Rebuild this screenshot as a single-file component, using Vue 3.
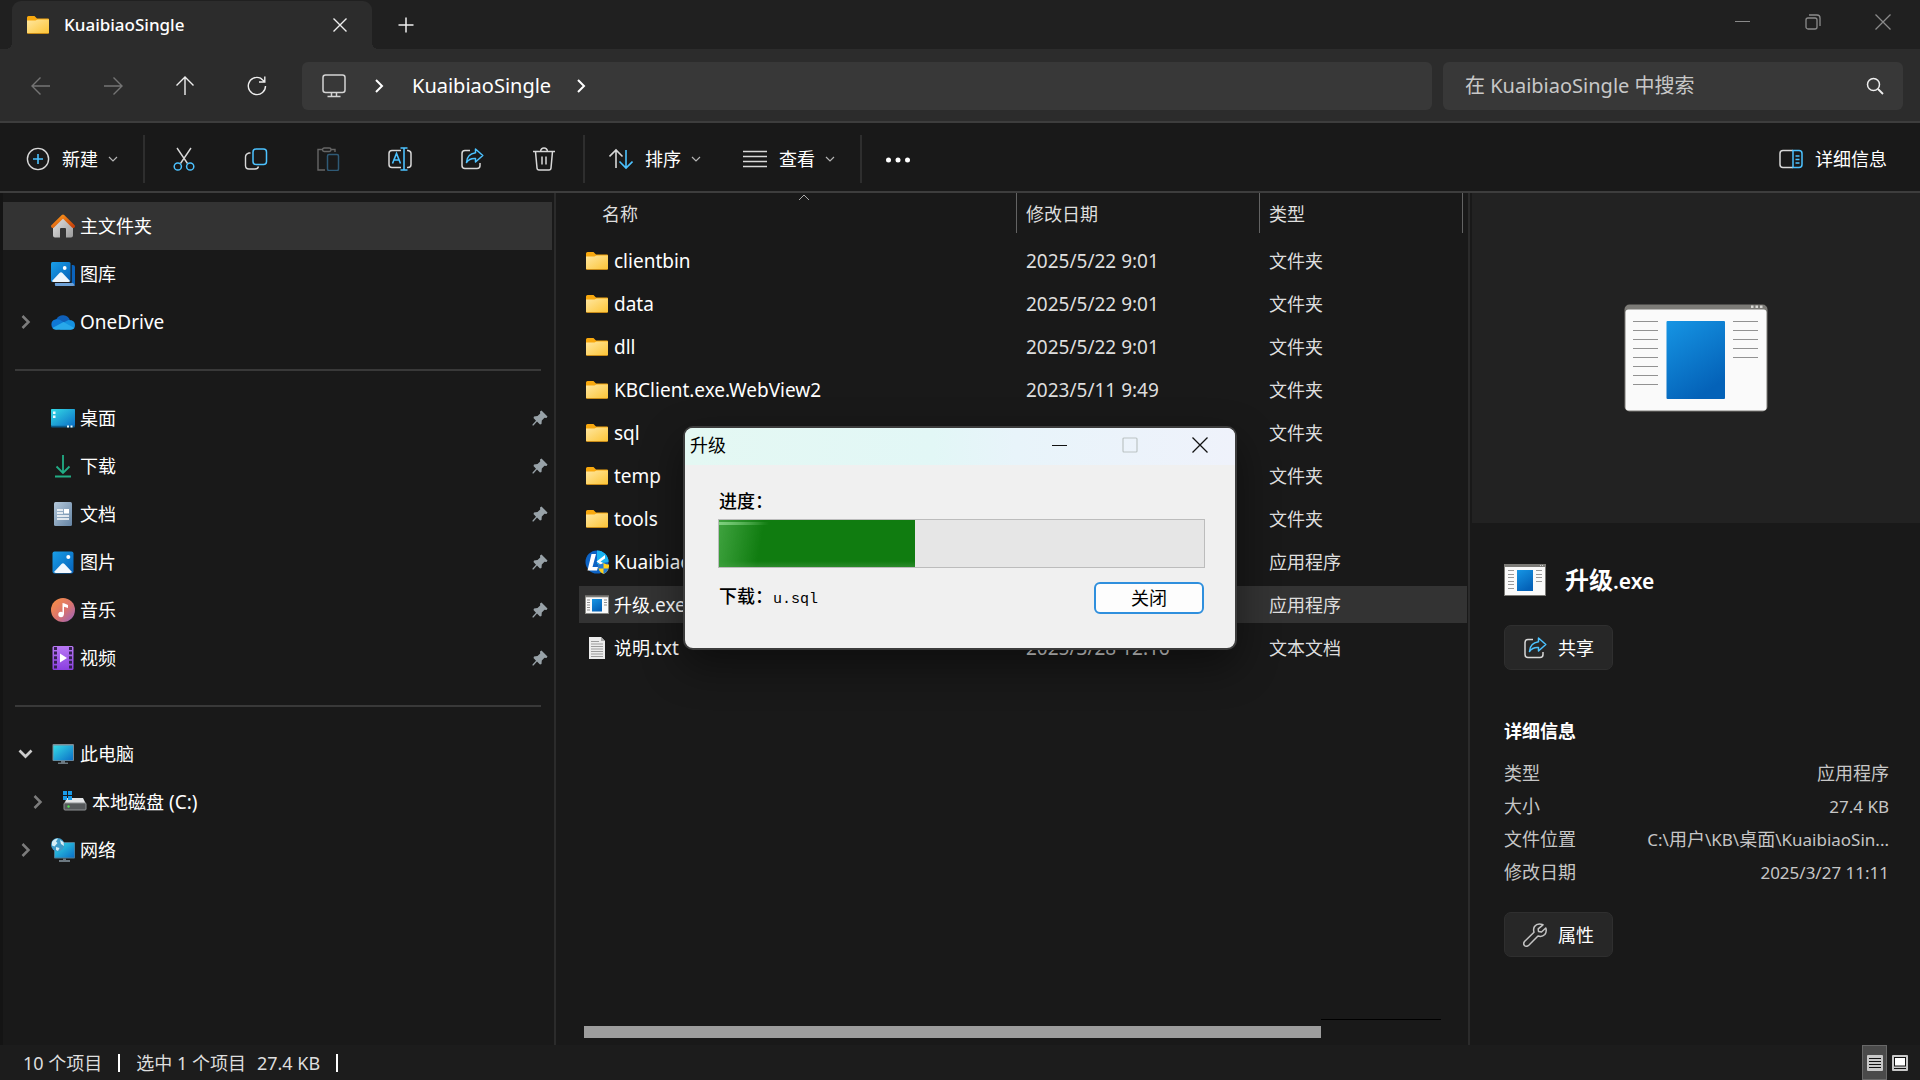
<script setup>
import { h, ref } from 'vue'

// Splits a label into Latin and CJK runs so each script gets its own size.
const MixedText = (props) =>
  h(
    'span',
    { class: 'mixed' },
    (props.text.match(/[\u0000-\u2fff]+|[^\u0000-\u2fff]+/g) || []).map((run) =>
      h('span', { class: run.charCodeAt(0) < 0x3000 ? 'latin' : 'cjk' }, run)
    )
  )
MixedText.props = ['text']

const groups = [
  [
    { icon: 'home', label: '主文件夹', active: true },
    { icon: 'gallery', label: '图库' },
    { icon: 'onedrive', label: 'OneDrive', chevron: 'right' },
  ],
  [
    { icon: 'desktop', label: '桌面', pinned: true },
    { icon: 'download', label: '下载', pinned: true },
    { icon: 'document', label: '文档', pinned: true },
    { icon: 'picture', label: '图片', pinned: true },
    { icon: 'music', label: '音乐', pinned: true },
    { icon: 'video', label: '视频', pinned: true },
  ],
  [
    { icon: 'pc', label: '此电脑', chevron: 'down' },
    { icon: 'disk', label: '本地磁盘 (C:)', chevron: 'right', nested: true },
    { icon: 'network', label: '网络', chevron: 'right' },
  ],
]

const files = [
  { icon: 'folder', name: 'clientbin', date: '2025/5/22 9:01', type: '文件夹' },
  { icon: 'folder', name: 'data', date: '2025/5/22 9:01', type: '文件夹' },
  { icon: 'folder', name: 'dll', date: '2025/5/22 9:01', type: '文件夹' },
  { icon: 'folder', name: 'KBClient.exe.WebView2', date: '2023/5/11 9:49', type: '文件夹' },
  { icon: 'folder', name: 'sql', date: '2025/5/22 9:01', type: '文件夹' },
  { icon: 'folder', name: 'temp', date: '2025/5/22 9:01', type: '文件夹' },
  { icon: 'folder', name: 'tools', date: '2025/5/22 9:01', type: '文件夹' },
  { icon: 'kuaibiao', name: 'KuaibiaoSingle.exe', date: '2025/5/22 9:01', type: '应用程序' },
  { icon: 'exe', name: '升级.exe', date: '2025/3/27 11:11', type: '应用程序', selected: true },
  { icon: 'txt', name: '说明.txt', date: '2025/3/28 12:16', type: '文本文档' },
]

const tools = [
  { icon: 'cut', label: '剪切' },
  { icon: 'copy', label: '复制' },
  { icon: 'paste', label: '粘贴' },
  { icon: 'rename', label: '重命名' },
  { icon: 'share', label: '共享' },
  { icon: 'trash', label: '删除' },
]

const details = [
  ['类型', '应用程序'],
  ['大小', '27.4 KB'],
  ['文件位置', 'C:\\用户\\KB\\桌面\\KuaibiaoSin...'],
  ['修改日期', '2025/3/27 11:11'],
]

const query = ref('')
</script>

<template>
  <svg class="sprite" aria-hidden="true">
    <defs>
      <linearGradient id="gFolder" x1="0" y1="0" x2="1" y2="1"><stop offset="0" stop-color="#ffe7a0" /><stop offset="1" stop-color="#fcc436" /></linearGradient>
      <linearGradient id="gBlue" x1="0" y1="0" x2="1" y2="1"><stop offset="0" stop-color="#1a9fe8" /><stop offset="1" stop-color="#0560b8" /></linearGradient>
      <linearGradient id="gApp" x1="0" y1="0" x2=".5" y2="1"><stop offset="0" stop-color="#1695e4" /><stop offset="1" stop-color="#0462b8" /></linearGradient>
      <linearGradient id="gCyan" x1="0" y1="0" x2="1" y2="1"><stop offset="0" stop-color="#35dbe6" /><stop offset="1" stop-color="#0b6fc7" /></linearGradient>
      <linearGradient id="gRoof" x1="0" y1="0" x2="1" y2="1"><stop offset="0" stop-color="#ff9a1c" /><stop offset="1" stop-color="#c8420a" /></linearGradient>
      <linearGradient id="gWall" x1="0" y1="0" x2="1" y2="1"><stop offset="0" stop-color="#e6e6e6" /><stop offset="1" stop-color="#9c9c9c" /></linearGradient>
      <linearGradient id="gDoc" x1="0" y1="0" x2="1" y2="1"><stop offset="0" stop-color="#b4c8da" /><stop offset="1" stop-color="#6584a4" /></linearGradient>
      <linearGradient id="gMusic" x1="0" y1="0" x2="1" y2="1"><stop offset="0" stop-color="#fb923f" /><stop offset="0.55" stop-color="#d9736f" /><stop offset="1" stop-color="#9561c4" /></linearGradient>
      <linearGradient id="gVideo" x1="0" y1="0" x2="0" y2="1"><stop offset="0" stop-color="#b878f4" /><stop offset="1" stop-color="#8a3fe0" /></linearGradient>
    </defs>
    <symbol id="folder" viewBox="0 0 24 20"><path d="M1 2.5Q1 1 2.500 1H8.500L11 3.500H22Q23 3.500 23 4.500V18H1Z" fill="#f8a80e" /><path d="M1 5.500H9.500L11.500 4.500H23V17.500Q23 18.500 22 18.500H2Q1 18.500 1 17.500Z" fill="url(#gFolder)" /><path d="M1.500 18.500H22.500" stroke="#c98b18" /></symbol>
    <symbol id="home" viewBox="0 0 24 24"><path d="M2 11L12 2L22 11V21.500Q22 23.500 20 23.500H15V15Q15 14 14 14H10Q9 14 9 15V23.500H4Q2 23.500 2 21.500Z" fill="url(#gWall)" /><path d="M1.800 12.200L12 2.200L22.200 12.200" fill="none" stroke="url(#gRoof)" stroke-width="3.400" stroke-linejoin="round" stroke-linecap="round" /></symbol>
    <symbol id="gallery" viewBox="0 0 24 24"><path d="M4 21H20.500V3H22Q24 3 24 5V22Q24 24 22 24H5Q3.500 24 4 21Z" fill="#0a63bd" /><path d="M4 21H22L24 23.500L22 24H5Q3.500 24 4 21Z" fill="#6da0d6" /><rect x="0" y="0" width="20.500" height="21" rx="1.500" fill="#1b1b1b" /><rect width="19.500" height="20" rx="1.500" fill="url(#gBlue)" /><path d="M1 19L8.500 11Q10 9.500 11.500 11L19 19Q18.500 20 17.500 20H2.500Q1.500 20 1 19Z" fill="#eef6fd" /><circle cx="13.700" cy="6" r="1.900" fill="#fff" /></symbol>
    <symbol id="onedrive" viewBox="0 0 24 24"><path d="M7 18.500A5 5 0 0 1 5.500 9A7.500 7.500 0 0 1 19 10.200L14 17Z" fill="#0f5fb8" /><path d="M5 19.500A5 5 0 0 1 4.500 9.600Q8 8.500 11.500 11.500L19 16Z" fill="#0f78d4" /><path d="M11.500 13L17.500 10Q24 10 24 15Q24 19.500 19.500 19.500H9Z" fill="#1490df" /><path d="M5 19.800Q2.500 19.800 1.400 18L12.500 12L23.300 18Q22 19.800 19.500 19.800Z" fill="#28a8ea" /></symbol>
    <symbol id="desktop" viewBox="0 0 24 24"><rect x="0" y="3" width="24" height="18.500" rx="1" fill="#0a5b8c" /><rect x="0" y="3" width="24" height="16.800" rx="1" fill="url(#gCyan)" /><path d="M2 5.500H4.500V8H2ZM2 9.500H4.500V12H2ZM16 19.500H18V21.500H16ZM19.500 19.500H21.500V21.500H19.500Z" fill="#eaf9ff" /></symbol>
    <symbol id="download" viewBox="0 0 24 24"><path d="M12 1V19M5.500 12.500L12 19L18.500 12.500M4 22.500H20" fill="none" stroke="#22ad86" stroke-width="1.800" /></symbol>
    <symbol id="document" viewBox="0 0 24 24"><rect x="3" y="0" width="18" height="24" rx="1.500" fill="url(#gDoc)" /><path d="M6 8H12M6 11H12M6 14H18M6 17H18" stroke="#fff" stroke-width="1.300" /><rect x="13" y="7" width="5" height="4.500" fill="#fff" /></symbol>
    <symbol id="picture" viewBox="0 0 24 24"><rect x="1.500" y="1.500" width="21" height="22" rx="2" fill="url(#gBlue)" /><path d="M3 22L10.500 14Q12 12.500 13.500 14L21 22Q20 23 19 23H5Q4 23 3 22Z" fill="#f2f8fe" /><circle cx="17.300" cy="7" r="2" fill="#fff" /></symbol>
    <symbol id="music" viewBox="0 0 24 24"><circle cx="12" cy="12" r="12" fill="url(#gMusic)" /><circle cx="10" cy="16.500" r="2.700" fill="#fff" /><path d="M11.500 16.500V5Q13 5 17 7V10L13 8.800V16.500Z" fill="#fff" /></symbol>
    <symbol id="video" viewBox="0 0 24 24"><rect x="1.500" y="0" width="21" height="24" rx="1.500" fill="url(#gVideo)" /><path d="M4.500 1V24M19.500 1V24" stroke="#33204f" stroke-width="3" stroke-dasharray="3 1.600" /><path d="M9 7.500L16 12L9 16.500Z" fill="#fff" /></symbol>
    <symbol id="pc" viewBox="0 0 24 24"><rect x="1.500" y="2" width="21.500" height="17" rx="1" fill="#7d8b94" /><rect x="2.500" y="3.500" width="19.500" height="14.800" fill="url(#gCyan)" /><path d="M10 19H14V20.500H17V22H7V20.500H10Z" fill="#6c7880" /></symbol>
    <symbol id="disk" viewBox="0 0 24 24"><path d="M4 8H20L23 14H1Z" fill="#e4e6e8" /><rect x="1" y="13" width="22" height="7" rx="1" fill="#55585b" stroke="#8e9194" /><circle cx="5.500" cy="16.500" r="1.200" fill="#4fe04f" /><path d="M0 1H4V5H0ZM5 1H9V5H5ZM0 6H4V10H0ZM5 6H9V10H5Z" fill="#1a9cea" /></symbol>
    <symbol id="network" viewBox="0 0 24 24"><rect x="3" y="4" width="21" height="16.500" rx="1" fill="#4f7c94" /><rect x="4" y="5" width="19.300" height="14.500" fill="url(#gCyan)" /><path d="M12 20.500H15V22H19V24H8V22H12Z" fill="#6c7880" /><circle cx="6.700" cy="6.700" r="6.700" fill="#3f9bc8" /><path d="M1 4Q3 .500 7 .500L5 3.500L6.500 5L3.500 8.500L1 7.500ZM9 2L12.500 4L13 8L10 6ZM5 9L8.500 10L7 13L5 12Z" fill="#d6eef6" /></symbol>
    <symbol id="pin" viewBox="0 0 16 16"><path d="M9.500 .500L15.500 6.500L14.500 8L12.500 7.800L9.800 10.500L9.500 14L8 14.500L5 11.500L1.500 15.500L.500 15.500L.500 14.500L4 10.800L1.500 8L2 6.500L5.500 6L8.200 3.500L8 1.500Z" fill="#98a2a8" /></symbol>
    <symbol id="right" viewBox="0 0 16 16"><path d="M5 2L11 8L5 14" fill="none" stroke="currentColor" stroke-width="2" /></symbol>
    <symbol id="twist-right" viewBox="0 0 16 16"><path d="M5.500 2L11.500 8L5.500 14" fill="none" stroke="currentColor" stroke-width="2.500" /></symbol>
    <symbol id="twist-down" viewBox="0 0 16 16"><path d="M2.500 4.500L8.500 10.500L14.500 4.500" fill="none" stroke="currentColor" stroke-width="2.700" /></symbol>
    <symbol id="caret" viewBox="0 0 10 10"><path d="M1 3L5 7L9 3" fill="none" stroke="#b4b4b4" stroke-width="1.200" /></symbol>
    <symbol id="exe" viewBox="0 0 24 20"><rect x=".5" y="1" width="23" height="17.500" fill="#fafafa" stroke="#8c8c88" /><path d="M0 1.500H24" stroke="#7c7b77" stroke-width="1.600" /><path d="M2 5H5M2 7.500H5M2 10H5M2 12.500H5M2 15H5M19 5H22M19 7.500H22M19 10H22" stroke="#8f8f8f" /><rect x="7" y="4" width="10" height="12.500" fill="url(#gApp)" /></symbol>
    <symbol id="txt" viewBox="0 0 24 24"><path d="M4 1H16L20 5V23H4Z" fill="#ececec" /><path d="M16 1V5H20Z" fill="#a9a9a9" /><path d="M6 5.500H14M6 8H18M6 10.500H18M6 13H18M6 15.500H18M6 18H18M6 20.500H18" stroke="#9c9c9c" /></symbol>
    <symbol id="kuaibiao" viewBox="0 0 24 24"><circle cx="12" cy="12" r="11.500" fill="#0d63c4" /><path d="M12 .500A11.500 11.500 0 0 1 23.500 12L12 14Z" fill="#1ab3f0" /><path d="M6.500 4H11L7.500 17H13L12 20.500H2.500Z" fill="#fff" /><path d="M20 5L11.500 11.500L19 17V13.500L15.500 11.500L20 8.500Z" fill="#fff" /><path d="M13 14.500Q16 14.500 18.500 13Q21 14.500 24 14.500Q24.500 21 18.500 24Q12.500 21 13 14.500Z" fill="#ffd21f" /><path d="M13 14.500Q16 14.500 18.500 13V18.500H13.200ZM18.500 18.500H23.800Q22.500 22 18.500 24Z" fill="#2378d4" /></symbol>
    <symbol id="share" viewBox="0 0 24 24"><path d="M10 3.500H5Q2 3.500 2 6.500V18.500Q2 21.500 5 21.500H17Q20 21.500 20 18.500V16" fill="none" stroke="#d8d8d8" stroke-width="1.500" /><path d="M15.500 2L22.800 8.500L15.500 15V11.500Q9.500 11 6.500 15.500Q7 7 15.500 5.800Z" fill="none" stroke="#4cc2ff" stroke-width="1.500" stroke-linejoin="round" /></symbol>
    <symbol id="cut" viewBox="0 0 24 24"><path d="M5 1L15.500 16.500M19 1L8.500 16.500" stroke="#d8d8d8" stroke-width="1.400" /><circle cx="5.800" cy="19.500" r="3.600" fill="none" stroke="#4cc2ff" stroke-width="1.500" /><circle cx="18.200" cy="19.500" r="3.600" fill="none" stroke="#4cc2ff" stroke-width="1.500" /></symbol>
    <symbol id="copy" viewBox="0 0 24 24"><path d="M6.500 6H5Q1.500 7 1.500 10V18.500Q1.500 22 5 22H11Q14 22 14.500 19.500" fill="none" stroke="#d8d8d8" stroke-width="1.400" /><rect x="9" y="2" width="13.500" height="15.500" rx="3" fill="none" stroke="#4cc2ff" stroke-width="1.500" /></symbol>
    <symbol id="paste" viewBox="0 0 24 24"><path d="M6.500 2.500H2V23H9M15 2.500H19V5" fill="none" stroke="#666" stroke-width="1.400" /><rect x="6.500" y="1" width="8.500" height="3.500" rx="1.700" fill="none" stroke="#666" stroke-width="1.400" /><rect x="11.500" y="7.500" width="11" height="16" rx="1.500" fill="none" stroke="#2f5a76" stroke-width="1.500" /></symbol>
    <symbol id="rename" viewBox="0 0 24 24"><path d="M13 3.500H4Q1 3.500 1 6.500V17.500Q1 20.500 4 20.500H13M19 3.500H20Q23 4 23 6.500V17.500Q23 20.500 20 20.500H19" fill="none" stroke="#d8d8d8" stroke-width="1.500" /><path d="M4.500 16.500L8.500 6.500L12.500 16.500M6 13H11M16 1V23M12.500 1H19.500M12.500 23H19.500" fill="none" stroke="#4cc2ff" stroke-width="1.600" /></symbol>
    <symbol id="trash" viewBox="0 0 24 24"><path d="M1 4.500H23M3.500 4.500L5 21Q5.200 23 7 23H17Q18.800 23 19 21L20.500 4.500M8.500 4.500Q9 1 12 1Q15 1 15.500 4.500M10 9.500V17.500M14 9.500V17.500" fill="none" stroke="#d8d8d8" stroke-width="1.500" /></symbol>
  </svg>

  <div class="explorer">
    <header class="titlebar">
      <div class="tab">
        <svg class="i24"><use href="#folder" /></svg>
        <span class="tab-name">KuaibiaoSingle</span>
        <button aria-label="关闭标签页"><svg width="16" height="16" viewBox="0 0 16 16"><path d="M1.500 1.500L14.500 14.500M14.500 1.500L1.500 14.500" stroke="#eee" stroke-width="1.400" /></svg></button>
      </div>
      <button class="add" aria-label="新建标签页"><svg width="16" height="16" viewBox="0 0 16 16"><path d="M8 .5V15.500M.5 8H15.500" stroke="#eee" stroke-width="1.500" /></svg></button>
      <div class="window-controls">
        <button aria-label="最小化"><svg width="16" height="16" viewBox="0 0 16 16"><path d="M0 7.500H15" stroke="#8a8a8a" /></svg></button>
        <button aria-label="还原"><svg width="16" height="16" viewBox="0 0 16 16" fill="none" stroke="#8a8a8a" stroke-width="1.300"><rect x="1" y="4" width="11" height="11" rx="2" /><path d="M4 1H12Q15 1 15 4V12" /></svg></button>
        <button aria-label="关闭"><svg width="16" height="16" viewBox="0 0 16 16"><path d="M.5 .5L15.500 15.500M15.500 .5L.5 15.500" stroke="#8a8a8a" stroke-width="1.300" /></svg></button>
      </div>
    </header>

    <nav class="navbar">
      <div class="history">
        <button aria-label="后退"><svg class="i24" viewBox="0 0 24 24"><path d="M21 12H3M11.500 3.500L3 12L11.500 20.500" fill="none" stroke="#747474" stroke-width="1.400" /></svg></button>
        <button aria-label="前进"><svg class="i24" viewBox="0 0 24 24"><path d="M3 12H21M12.500 3.500L21 12L12.500 20.500" fill="none" stroke="#747474" stroke-width="1.400" /></svg></button>
        <button aria-label="上移"><svg class="i24" viewBox="0 0 24 24"><path d="M12 21V3M3.500 11.500L12 3L20.500 11.500" fill="none" stroke="#eee" stroke-width="1.400" /></svg></button>
        <button aria-label="刷新"><svg class="i24" viewBox="0 0 24 24"><path d="M20.500 12A8.600 8.600 0 1 1 15.500 4.200L19.500 7.500M19.800 2.500V8H14" fill="none" stroke="#eee" stroke-width="1.400" /></svg></button>
      </div>
      <div class="address">
        <svg class="i24" viewBox="0 0 24 24" fill="none" stroke="#d4d4d4" stroke-width="1.500"><rect x="1" y="1" width="22" height="17.500" rx="2.500" /><path d="M9.500 18.500V22M14.500 18.500V22M5.500 22.500H18.500" /></svg>
        <svg class="i16"><use href="#right" /></svg>
        <a href="#">KuaibiaoSingle</a>
        <svg class="i16"><use href="#right" /></svg>
      </div>
      <label class="search">
        <input v-model="query" type="text" placeholder="在 KuaibiaoSingle 中搜索" aria-label="搜索" />
        <svg width="18" height="18" viewBox="0 0 18 18"><circle cx="7.500" cy="7.500" r="6" fill="none" stroke="#eee" stroke-width="1.500" /><path d="M12 12L17 17" stroke="#eee" stroke-width="1.800" /></svg>
      </label>
    </nav>

    <div class="commands">
      <button class="menu">
        <svg class="i24" viewBox="0 0 24 24" fill="none" stroke-width="1.400"><circle cx="12" cy="12" r="10.600" stroke="#d8d8d8" /><path d="M12 7V17M7 12H17" stroke="#4cc2ff" stroke-width="1.600" /></svg>
        <span>新建</span><svg class="i10"><use href="#caret" /></svg>
      </button>
      <i class="divider"></i>
      <div class="tools">
        <button v-for="t in tools" :key="t.icon" :aria-label="t.label"><svg class="i24"><use :href="'#' + t.icon" /></svg></button>
      </div>
      <i class="divider"></i>
      <button class="menu sort">
        <svg class="i24" viewBox="0 0 24 24" fill="none" stroke-width="1.600"><path d="M7 21V3M.5 9.500L7 3L13.500 9.500" stroke="#d8d8d8" /><path d="M17 3V21M10.500 14.500L17 21L23.500 14.500" stroke="#4cc2ff" /></svg>
        <span>排序</span><svg class="i10"><use href="#caret" /></svg>
      </button>
      <button class="menu view">
        <svg class="i24" viewBox="0 0 24 24"><path d="M0 4.500H24M0 9.500H24M0 14.500H24M0 19.500H24" stroke="#d8d8d8" stroke-width="1.500" /></svg>
        <span>查看</span><svg class="i10"><use href="#caret" /></svg>
      </button>
      <i class="divider"></i>
      <button class="more" aria-label="更多"><svg class="i24" viewBox="0 0 24 24" fill="#fff"><circle cx="2.500" cy="13" r="2.500" /><circle cx="12" cy="13" r="2.500" /><circle cx="21.500" cy="13" r="2.500" /></svg></button>
      <button class="menu pane-toggle">
        <svg class="i24" viewBox="0 0 24 24" fill="none" stroke-width="1.500"><path d="M14 3.500H4Q1 3.500 1 6.500V17.500Q1 20.500 4 20.500H14" stroke="#d8d8d8" /><path d="M14 3.500H20Q23 3.500 23 6.500V17.500Q23 20.500 20 20.500H14ZM16.500 9H20.500M16.500 12.500H20.500M16.500 16H20.500" stroke="#4cc2ff" /></svg>
        <span>详细信息</span>
      </button>
    </div>

    <div class="content">
      <aside class="sidebar">
        <ul v-for="(group, g) in groups" :key="g">
          <li v-for="item in group" :key="item.label">
            <a href="#" class="place" :class="{ active: item.active, nested: item.nested }">
              <span class="twist" :class="item.chevron"><svg v-if="item.chevron" class="i16"><use :href="'#twist-' + item.chevron" /></svg></span>
              <svg class="i24"><use :href="'#' + item.icon" /></svg>
              <MixedText :text="item.label" />
              <svg v-if="item.pinned" class="i16 pin"><use href="#pin" /></svg>
            </a>
          </li>
        </ul>
      </aside>

      <main class="files">
        <table>
          <colgroup><col class="c-name" /><col class="c-date" /><col /></colgroup>
          <thead>
            <tr>
              <th scope="col"><div>名称<svg class="sorted" width="12" height="8" viewBox="0 0 12 8"><path d="M1 7L6 2L11 7" fill="none" stroke="#aaa" /></svg></div></th>
              <th scope="col"><div>修改日期</div></th>
              <th scope="col"><div class="last">类型</div></th>
            </tr>
          </thead>
          <tbody>
            <tr v-for="f in files" :key="f.name" :class="{ selected: f.selected }">
              <td><div class="name"><svg class="i24"><use :href="'#' + f.icon" /></svg><MixedText :text="f.name" /></div></td>
              <td><MixedText :text="f.date" /></td>
              <td><MixedText :text="f.type" /></td>
            </tr>
          </tbody>
        </table>
        <div class="scroll"><div class="edge"></div><div class="thumb"></div></div>
      </main>

      <aside class="details">
        <div class="preview">
          <svg width="144" height="108" viewBox="0 0 144 108">
            <rect x=".5" y=".5" width="143" height="107" rx="5" fill="#7c7b77" />
            <rect x="1.500" y="5.500" width="141" height="101" rx="3" fill="#fafafa" />
            <path d="M127 1.500H129.500V4H127ZM131.500 1.500H134V4H131.500ZM136 1.500H138.500V4H136Z" fill="#d8d8d4" />
            <path d="M9 17.500H34M9 26.500H34M9 35.500H34M9 44.500H34M9 53.500H34M9 62.500H34M9 71.500H34M9 80.500H34M109 17.500H134M109 26.500H134M109 35.500H134M109 44.500H134M109 53.500H134" stroke="#929292" />
            <rect x="42.500" y="17" width="58.500" height="78" rx="1" fill="url(#gApp)" />
          </svg>
        </div>
        <div class="info">
          <h2>
            <svg width="42" height="32" viewBox="0 0 42 32"><rect x=".5" y=".5" width="41" height="31" fill="#fafafa" stroke="#7c7b77" /><path d="M0 1.500H42" stroke="#7c7b77" stroke-width="3" /><path d="M36 1.500H40" stroke="#ccc" stroke-dasharray="1 1" /><path d="M4 6.500H10M4 10.500H10M4 13.500H10M4 17.500H10M4 20.500H10M4 24.500H10M32 6.500H38M32 10.500H38M32 13.500H38M32 17.500H38" stroke="#9a9a9a" /><rect x="13" y="6" width="16" height="21" fill="url(#gApp)" /></svg>
            <MixedText text="升级.exe" />
          </h2>
          <button class="action"><svg class="i24"><use href="#share" /></svg>共享</button>
          <h3>详细信息</h3>
          <dl>
            <div v-for="[key, value] in details" :key="key"><dt>{{ key }}</dt><dd><MixedText :text="value" /></dd></div>
          </dl>
          <button class="action"><svg class="i24" viewBox="0 0 24 24"><path d="M20 1.800Q14.500 -.5 11.500 3.500Q10 6 11 9.300L1.500 18.500Q-.3 21 1.800 22.800Q4 24 5.800 22.300L15 13Q19 14.300 21.800 11.500Q24 8.500 22.800 5L18.500 9L15.500 8.500L15.200 5.800Z" fill="none" stroke="#c4c4c4" stroke-width="1.500" stroke-linejoin="round" /></svg>属性</button>
        </div>
      </aside>
    </div>

    <footer class="status">
      <MixedText text="10 个项目" /><i></i><MixedText text="选中 1 个项目" /><MixedText class="size" text="27.4 KB" /><i></i>
      <div class="modes">
        <button class="on" aria-label="详细列表"><svg width="16" height="16" viewBox="0 0 16 16"><rect width="16" height="16" rx="1" fill="#c8c8c8" /><path d="M2 3.500H14M2 6.500H14M2 9.500H14M2 12.500H14" stroke="#111" /></svg></button>
        <button aria-label="大图标"><svg width="16" height="16" viewBox="0 0 16 16"><rect width="16" height="16" rx="1" fill="#c8c8c8" /><rect x="2.500" y="2.500" width="11" height="8.500" fill="#fff" stroke="#111" /><path d="M2 13.500H14" stroke="#111" /></svg></button>
      </div>
    </footer>

    <section class="dialog" role="dialog" aria-labelledby="dlg-title">
      <header>
        <span id="dlg-title">升级</span>
        <button aria-label="最小化"><svg width="16" height="16" viewBox="0 0 16 16"><path d="M0 8.500H15" stroke="#111" /></svg></button>
        <button aria-label="最大化" disabled><svg width="16" height="16" viewBox="0 0 16 16"><rect x="1" y="1" width="14" height="14" rx="1" fill="none" stroke="#bcc4c4" stroke-width="1.200" /></svg></button>
        <button aria-label="关闭"><svg width="16" height="16" viewBox="0 0 16 16"><path d="M.5 .5L15.500 15.500M15.500 .5L.5 15.500" stroke="#111" stroke-width="1.300" /></svg></button>
      </header>
      <div class="body">
        <label for="progress">进度：</label>
        <progress id="progress" max="200" value="81"></progress>
        <div class="foot">
          <span>下载：<span class="file">u.sql</span></span>
          <button>关闭</button>
        </div>
      </div>
    </section>
  </div>
</template>

<style>
body {
  background: #191919;
}
.latin {
  font-size: 19px;
  white-space: pre;
}
</style>

<style scoped>
.sprite {
  position: absolute;
  width: 0;
  height: 0;
}
.explorer {
  position: relative;
  display: flex;
  flex-direction: column;
  min-height: 100vh;
  background: #191919;
  color: #fff;
  font-family: "Noto Sans", "Noto Sans CJK SC", sans-serif;
  font-size: 18px;
  line-height: 24px;
}
button {
  display: flex;
  align-items: center;
  justify-content: center;
  padding: 0;
  border: 0;
  background: none;
  color: inherit;
  font: inherit;
}
a {
  color: inherit;
  text-decoration: none;
}
svg {
  flex: none;
}
.i24 {
  width: 24px;
  height: 24px;
}
.i16 {
  width: 16px;
  height: 16px;
}
.i10 {
  width: 10px;
  height: 10px;
}

/* Title bar */
.titlebar {
  display: flex;
  align-items: flex-start;
  height: 49px;
  background: #202020;
}
.tab {
  position: relative;
  display: flex;
  align-items: center;
  box-sizing: border-box;
  width: 360px;
  height: 48px;
  margin: 1px 0 0 12px;
  padding: 0 24px 0 14px;
  border-radius: 9px 9px 0 0;
  background: #2c2c2c;
}
.tab::before,
.tab::after {
  content: "";
  position: absolute;
  bottom: 0;
  width: 6px;
  height: 6px;
}
.tab::before {
  left: -6px;
  background: radial-gradient(circle at 0 0, transparent 6px, #2c2c2c 6px);
}
.tab::after {
  right: -6px;
  background: radial-gradient(circle at 100% 0, transparent 6px, #2c2c2c 6px);
}
.tab-name {
  flex: 1;
  margin-left: 14px;
  font-size: 17px;
  font-weight: 500;
}
.add {
  width: 48px;
  height: 49px;
  margin-left: 10px;
}
.window-controls {
  display: flex;
  margin-right: 2px;
  margin-left: auto;
}
.window-controls button {
  width: 70px;
  height: 43px;
}

/* Navigation bar */
.navbar {
  display: flex;
  align-items: center;
  gap: 11px;
  height: 70px;
  padding: 2px 17px 0 0;
  border-bottom: 2px solid #3d3d3d;
  background: #2c2c2c;
}
.history {
  display: flex;
  width: 291px;
  padding-left: 5px;
  box-sizing: border-box;
}
.history button {
  width: 72px;
  height: 48px;
  flex: none;
}
.address,
.search {
  display: flex;
  align-items: center;
  box-sizing: border-box;
  height: 48px;
  border-radius: 6px;
  background: #383838;
}
.address {
  flex: 1;
  padding-left: 20px;
  font-size: 20px;
}
.address .i16 {
  margin: 0 25px;
}
.address a + .i16 {
  margin-left: 22px;
}
.search {
  width: 460px;
  padding: 0 19px 0 22px;
}
.search input {
  flex: 1;
  min-width: 0;
  padding: 0;
  border: 0;
  outline: 0;
  background: none;
  color: #fff;
  font: inherit;
  font-size: 20px;
}
.search input::placeholder {
  color: #c8c8c8;
  opacity: 1;
}

/* Command bar */
.commands {
  display: flex;
  align-items: center;
  height: 64px;
  padding: 4px 33px 0 26px;
  border-bottom: 2px solid #3d3d3d;
}
.menu {
  gap: 12px;
  height: 48px;
}
.menu .i10 {
  margin-left: -2px;
}
.divider {
  width: 2px;
  height: 48px;
  background: #2e2e2e;
}
.menu + .divider {
  margin-left: 25px;
}
.tools {
  display: flex;
  padding: 0 3px;
}
.tools button {
  width: 72px;
  height: 48px;
}
.sort {
  margin-left: 24px;
}
.view {
  margin-left: 42px;
}
.more {
  width: 72px;
  height: 48px;
}
.pane-toggle {
  margin-left: auto;
}

/* Columns */
.content {
  display: flex;
  flex: 1;
}
.sidebar {
  width: 551px;
  padding: 9px 0 0 3px;
  border-right: 2px solid #2b2b2b;
  box-shadow: inset 3px 0 #141414;
}
.sidebar ul {
  margin: 0;
  padding: 0;
  list-style: none;
}
.sidebar ul + ul::before {
  content: "";
  display: block;
  height: 2px;
  margin: 23px 13px 23px 12px;
  background: #393939;
}
.place {
  display: flex;
  align-items: center;
  box-sizing: border-box;
  width: 549px;
  height: 48px;
  padding-right: 4px;
  padding-left: 14px;
}
.place .i24 {
  margin-right: 5px;
}
.nested {
  padding-left: 26px;
}
.active {
  background: #333;
}
.twist {
  display: flex;
  width: 34px;
  color: #7c7c7c;
}
.twist.down {
  color: #ccc;
}
.pin {
  margin-left: auto;
}

/* File list */
.files {
  display: flex;
  flex: 1;
  flex-direction: column;
  min-width: 0;
  padding: 0 1px 0 23px;
}
table {
  width: 100%;
  border-collapse: separate;
  border-spacing: 0;
  table-layout: fixed;
}
.c-name {
  width: 437px;
}
.c-date {
  width: 243px;
}
th {
  height: 46px;
  padding: 0;
  vertical-align: top;
  text-align: left;
  font-weight: 400;
  color: #dedede;
}
th div {
  position: relative;
  box-sizing: border-box;
  height: 40px;
  padding: 9px 0 0 9px;
  border-left: 1px solid #636363;
}
th:first-child div {
  padding-left: 22px;
  border-left-color: transparent;
}
th .last {
  margin-right: 4px;
  border-right: 1px solid #636363;
}
.sorted {
  position: absolute;
  top: 0;
  left: 50%;
}
td {
  height: 37px;
  padding: 0 0 0 10px;
  border-top: 3px solid transparent;
  border-bottom: 3px solid transparent;
  background-clip: padding-box;
  color: #dedede;
}
td:first-child {
  padding-left: 6px;
  color: #fff;
}
.name {
  display: flex;
  align-items: center;
  gap: 5px;
}
.selected td {
  background-color: #333;
}
.scroll {
  margin: auto 26px 7px 5px;
}
.edge {
  width: 14%;
  height: 1px;
  margin: 0 0 6px auto;
  background: #000;
}
.thumb {
  width: 86%;
  height: 12px;
  background: #9d9d9d;
}

/* Details pane */
.details {
  width: 448px;
  border-left: 2px solid #2b2b2b;
  padding-left: 2px;
}
.preview {
  display: flex;
  align-items: center;
  justify-content: center;
  height: 330px;
  background: #222;
}
.info {
  padding: 40px 31px 20px 32px;
}
h2,
h3,
dl,
dd {
  margin: 0;
}
h2 {
  display: flex;
  align-items: center;
  gap: 19px;
  height: 34px;
  font-size: 24px;
  font-weight: 700;
}
h2 :deep(.latin) {
  font-size: 21px;
  font-weight: 600;
}
.action {
  gap: 11px;
  width: 109px;
  height: 45px;
  border: 1px solid #2f2f2f;
  border-radius: 7px;
  background: #272727;
}
h2 + .action {
  margin-top: 28px;
}
h3 {
  margin: 49px 0 18px;
  font-size: 18px;
  font-weight: 700;
}
dl {
  display: flex;
  flex-direction: column;
  gap: 9px;
  margin: 0 0 28px;
  color: #c6c6c6;
}
dl div {
  display: flex;
  justify-content: space-between;
  height: 24px;
}
dd :deep(.latin) {
  font-size: 17px;
}

/* Status bar */
.status {
  display: flex;
  align-items: center;
  height: 35px;
  padding: 0 8px 0 23px;
  background: #1c1c1c;
  color: #dedede;
}
.status :deep(.latin) {
  font-size: 18px;
}
.status i {
  width: 2px;
  height: 18px;
  margin: 0 16px;
  background: #fff;
}
.status .size {
  margin-left: 11px;
}
.modes {
  display: flex;
  margin-left: auto;
}
.modes button {
  box-sizing: border-box;
  width: 25px;
  height: 35px;
}
.modes .on {
  border: 1px solid #686868;
  background: #4a4a4a;
}

/* Update dialog, floating over the window */
.dialog {
  position: absolute;
  top: 426px;
  left: calc(50% - 277px);
  box-sizing: border-box;
  width: 554px;
  border: 2px solid #3c3c3c;
  border-radius: 10px;
  background: #f0f0f0;
  box-shadow: 0 16px 40px rgba(0, 0, 0, 0.45);
  color: #000;
  overflow: hidden;
}
.dialog header {
  display: flex;
  align-items: center;
  height: 34px;
  padding: 0 0 3px 5px;
  background: linear-gradient(90deg, #e4f8f3, #e2f7f6 45%, #e8f4fa 60%, #eff2fb);
}
.dialog header span {
  margin-right: auto;
}
.dialog header button {
  width: 70px;
  height: 34px;
}
.body {
  padding: 24px 30px 34px 33px;
}
.body label {
  display: block;
  padding-left: 1px;
  font-weight: 500;
}
progress {
  display: block;
  box-sizing: border-box;
  width: 100%;
  height: 49px;
  margin: 6px 0 14px;
  border: 1px solid #bcbcbc;
  background: #e6e6e6;
  appearance: none;
}
progress::-webkit-progress-bar {
  background: #e6e6e6;
}
progress::-webkit-progress-value {
  background:
    linear-gradient(90deg, #7fd07f, rgba(127, 208, 127, 0)) 0 2px / 50px 3px no-repeat,
    linear-gradient(100deg, #3fa33f, rgba(16, 124, 16, 0) 45px),
    linear-gradient(0deg, #2b8a2b, #107c10 6px);
}
.foot {
  display: flex;
  align-items: center;
  justify-content: space-between;
  padding-left: 1px;
  font-weight: 500;
}
.file {
  font-family: "Liberation Mono", monospace;
  font-size: 15px;
}
.foot button {
  box-sizing: border-box;
  width: 110px;
  height: 32px;
  margin-right: 1px;
  border: 2px solid #2f8fdd;
  border-radius: 6px;
  background: #fdfdfd;
  font-weight: 400;
}
</style>
